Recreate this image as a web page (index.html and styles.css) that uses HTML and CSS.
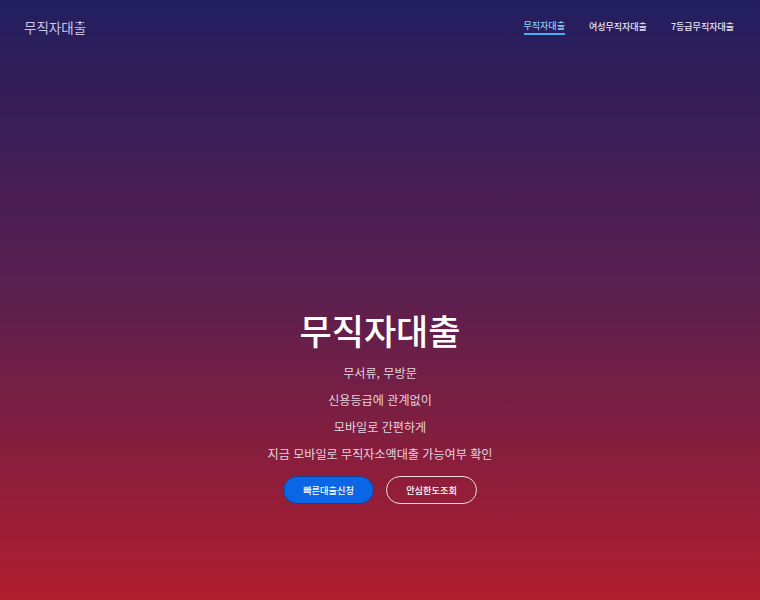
FILE: index.html
```html
<!DOCTYPE html>
<html lang="ko">
<head>
<meta charset="utf-8">
<title>무직자대출</title>
<link rel="stylesheet" href="styles.css">
</head>
<body>
<div class="page">
  <header class="topbar">
    <div class="logo">무직자대출</div>
    <nav class="nav">
      <a class="nav-link active" href="#">무직자대출</a>
      <a class="nav-link" href="#">여성무직자대출</a>
      <a class="nav-link" href="#">7등급무직자대출</a>
    </nav>
  </header>
  <main class="hero">
    <h1 class="title">무직자대출</h1>
    <p class="line">무서류, 무방문</p>
    <p class="line">신용등급에 관계없이</p>
    <p class="line">모바일로 간편하게</p>
    <p class="line">지금 모바일로 무직자소액대출 가능여부 확인</p>
    <div class="actions">
      <a class="btn btn-primary" href="#">빠른대출신청</a>
      <a class="btn btn-outline" href="#">안심한도조회</a>
    </div>
  </main>
</div>
</body>
</html>
```

FILE: styles.css
```css
* { box-sizing: border-box; }
html, body { margin: 0; padding: 0; height: 100%; }
body {
  font-family: "Noto Sans CJK KR", "Noto Sans", sans-serif;
  color: #fff;
  background: linear-gradient(to bottom, #231e5f 0%, #5c1f4e 50%, #b11d2e 100%);
}
.page {
  height: 600px;
  display: flex;
  flex-direction: column;
}
.topbar {
  display: flex;
  justify-content: space-between;
  align-items: flex-start;
  padding: 16px 26px 0 24px;
  height: 55px;
}
.logo {
  font-size: 13.5px;
  line-height: 22px;
  color: #c9c3e6;
}
.nav {
  display: flex;
  gap: 24px;
  padding-top: 2px;
}
.nav-link {
  font-size: 9px;
  line-height: 17px;
  color: #e6e3f2;
  text-decoration: none;
  font-weight: 500;
}
.nav-link.active {
  color: #8fcaf2;
  border-bottom: 2px solid #4aaef0;
  line-height: 15px;
}
.hero {
  flex: 1;
  display: flex;
  flex-direction: column;
  align-items: center;
  justify-content: flex-end;
  padding-bottom: 96px;
  text-align: center;
}
.title {
  margin: 0 0 14px;
  font-size: 35px;
  line-height: 40px;
  font-weight: 500;
  color: #fff;
}
.line {
  margin: 0 0 9px;
  font-size: 12.1px;
  line-height: 18px;
  color: #e3d3de;
}
.actions {
  display: flex;
  gap: 12px;
  margin-top: 4px;
}
.btn {
  display: flex;
  align-items: center;
  justify-content: center;
  width: 91px;
  height: 28px;
  border-radius: 14px;
  font-size: 9.2px;
  color: #fff;
  text-decoration: none;
  font-weight: 500;
}
.btn-primary {
  background: #0a66e4;
  border: 1px solid #153e9c;
}
.btn-outline {
  border: 1.5px solid #eadbe0;
  background: transparent;
}
```
